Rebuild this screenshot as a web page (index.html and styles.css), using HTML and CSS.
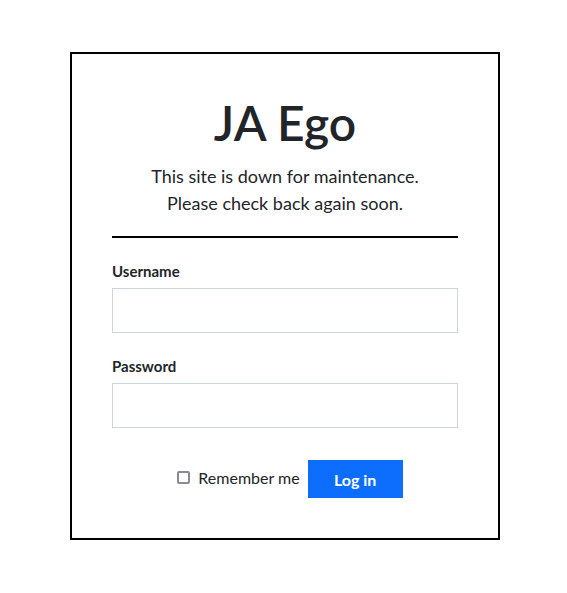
FILE: index.html
```html
<!DOCTYPE html>
<html lang="en">
<head>
<meta charset="utf-8">
<title>JA Ego - Offline</title>
<link rel="stylesheet" href="styles.css">
</head>
<body>
<main class="card">
  <h1 class="title">JA Ego</h1>
  <p class="message">This site is down for maintenance.<br>Please check back again soon.</p>
  <hr class="divider">
  <form class="form">
    <div class="field">
      <label class="label" for="username">Username</label>
      <input class="input" id="username" type="text">
    </div>
    <div class="field">
      <label class="label" for="password">Password</label>
      <input class="input" id="password" type="password">
    </div>
    <div class="actions">
      <label class="remember"><span class="checkbox"></span>Remember me</label>
      <button class="btn" type="button">Log in</button>
    </div>
  </form>
</main>
</body>
</html>
```

FILE: styles.css
```css
* { box-sizing: border-box; }
html, body { margin: 0; padding: 0; background: #fff; }
body {
  font-family: Lato, "Open Sans", sans-serif;
  color: #212529;
  padding-top: 52px;
}
.card {
  width: 430px;
  margin: 0 0 0 70px;
  border: 2px solid #000;
  padding: 40px 40px 40px;
}
.title {
  margin: 0;
  text-align: center;
  font-size: 48px;
  font-weight: 600;
  line-height: 58px;
}
.message {
  margin: 11px 0 0;
  text-align: center;
  font-size: 18px;
  line-height: 27px;
}
.divider {
  margin: 19px 0 0;
  border: 0;
  border-top: 2px solid #000;
  height: 0;
}
.form { margin-top: 23px; }
.field { display: flex; flex-direction: column; margin-bottom: 23px; }
.label {
  font-size: 15px;
  font-weight: 700;
  line-height: 20px;
  margin-bottom: 7px;
}
.input {
  height: 45px;
  border: 1px solid #ced4da;
  border-radius: 0;
  padding: 6px 12px;
  font: inherit;
}
.actions {
  display: flex;
  justify-content: center;
  align-items: center;
  gap: 8px;
  margin-top: 32px;
  padding-left: 10px;
}
.remember {
  display: flex;
  align-items: center;
  gap: 8px;
  font-size: 16px;
  margin-bottom: 3px;
}
.checkbox {
  width: 13px;
  height: 13px;
  border: 2px solid #8a8a96;
  border-radius: 2px;
}
.btn {
  width: 95px;
  height: 38px;
  border: 0;
  background: #0d6efd;
  color: #fff;
  font: inherit;
  font-size: 16px;
  font-weight: 700;
}
```
